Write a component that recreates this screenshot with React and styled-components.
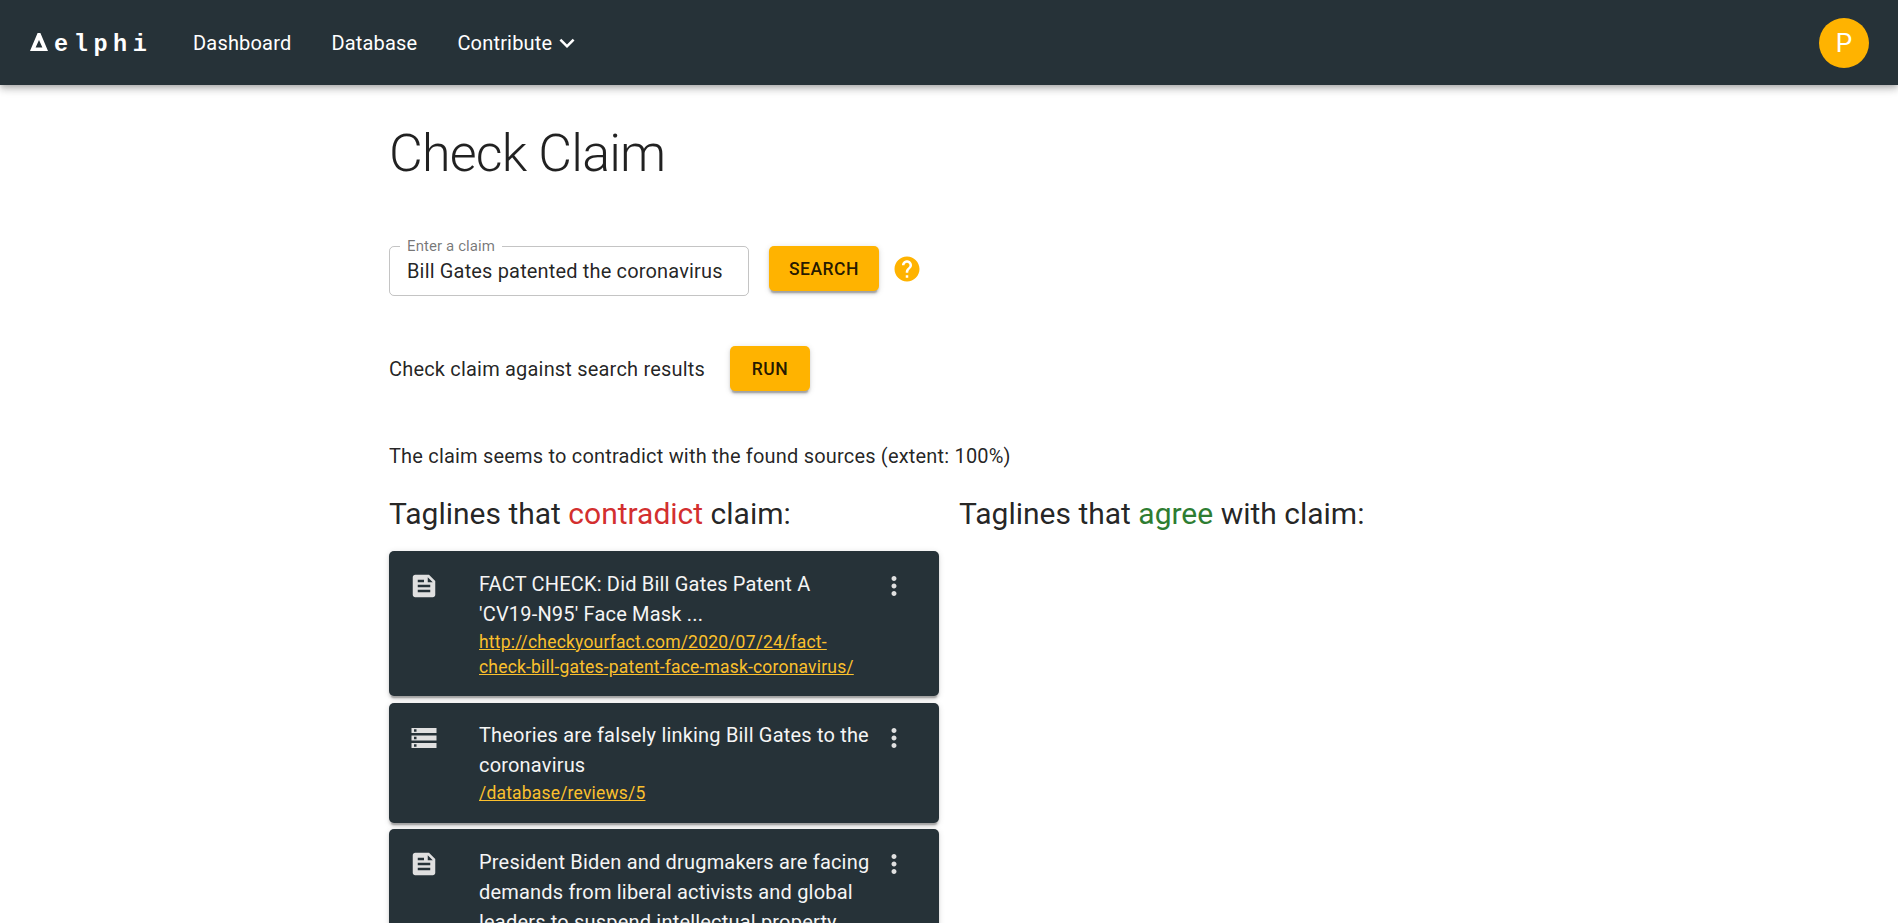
import React from "react";
import styled, { createGlobalStyle } from "styled-components";

const GlobalStyle = createGlobalStyle`
  * { box-sizing: border-box; }
  html, body { margin: 0; height: 100%; overflow: hidden; background: #fff; }
  body {
    font-family: Roboto, "Liberation Sans", sans-serif;
    font-size: 20px;
    line-height: 30px;
    letter-spacing: 0.00938em;
    color: rgba(0, 0, 0, 0.87);
  }
  h1, h2, p { margin: 0; font-weight: 400; }
`;

const Bar = styled.header`
  display: flex;
  align-items: center;
  height: 85px;
  padding: 0 29px 0 30px;
  background: #263238;
  color: #fff;
  box-shadow: 0 2.5px 5px -1.25px rgba(0, 0, 0, 0.2),
    0 5px 6.25px rgba(0, 0, 0, 0.14), 0 1.25px 12.5px rgba(0, 0, 0, 0.12);
`;

const Logo = styled.div`
  display: flex;
  align-items: baseline;
  width: 163px;
  padding-top: 4px;
  font-family: "Liberation Mono", monospace;
  font-weight: 700;
  font-size: 23.5px;
  letter-spacing: 5.6px;
`;

const LogoMark = styled.svg`
  width: 18px;
  height: 18px;
  margin-right: 6px;
`;

const Nav = styled.nav`
  display: flex;
  flex: 1;
  gap: 40px;
`;

const NavItem = styled.span`
  display: flex;
  align-items: center;
`;

const Chevron = styled.svg`
  width: 30px;
  height: 30px;
  fill: currentColor;
`;

const Avatar = styled.div`
  display: flex;
  align-items: center;
  justify-content: center;
  width: 50px;
  height: 50px;
  padding-top: 1px;
  border-radius: 50%;
  background: #ffb300;
  font-size: 26px;
  letter-spacing: 0;
`;

const Page = styled.main`
  width: 1120px;
  margin-left: 389px;
  padding-top: 38px;
`;

const Title = styled.h1`
  height: 62px;
  font-size: 52px;
  font-weight: 300;
  line-height: 62px;
  letter-spacing: -0.01562em;
`;

const Row = styled.div`
  display: flex;
  align-items: ${(p) => p.$align || "center"};
  margin-top: ${(p) => p.$top}px;
`;

const Field = styled.fieldset`
  width: 360px;
  height: 56px;
  margin: -6px 20px 0 0;
  padding: 3px 17px 0;
  border: 1px solid rgba(0, 0, 0, 0.23);
  border-radius: 5px;
`;

const FieldLabel = styled.legend`
  height: 13px;
  margin-left: -7px;
  padding: 0 7px;
  font-size: 15px;
  line-height: 13px;
  letter-spacing: 0.1px;
  color: rgba(0, 0, 0, 0.54);
`;

const FieldValue = styled.div`
  letter-spacing: 0.16px;
  white-space: nowrap;
`;

const Button = styled.button`
  width: ${(p) => p.$width}px;
  height: 45px;
  padding: 0;
  border: 0;
  border-radius: 5px;
  background: #ffb300;
  color: rgba(0, 0, 0, 0.87);
  font: 500 17.5px/30px Roboto, sans-serif;
  letter-spacing: 0.02857em;
  box-shadow: 0 3.75px 1.25px -2.5px rgba(0, 0, 0, 0.2),
    0 2.5px 2.5px rgba(0, 0, 0, 0.14), 0 1.25px 6.25px rgba(0, 0, 0, 0.12);
`;

const Icon = styled.svg`
  flex: none;
  width: 30px;
  height: 30px;
  fill: currentColor;
`;

const HelpIcon = styled(Icon)`
  margin: 8px 0 0 13px;
  color: #ffb300;
`;

const RunLabel = styled.p`
  width: 341px;
`;

const Verdict = styled.p`
  margin-top: 50px;
`;

const Columns = styled.div`
  display: grid;
  grid-template-columns: 550px 550px;
  column-gap: 20px;
  margin-top: 23px;
`;

const ColumnTitle = styled.h2`
  margin-bottom: 17px;
  font-size: 30px;
  line-height: 40px;
  letter-spacing: 0;
`;

const Tone = styled.span`
  color: ${(p) => p.$color};
`;

const CardList = styled.div`
  display: flex;
  flex-direction: column;
  gap: 6.5px;
`;

const Card = styled.article`
  display: flex;
  align-items: flex-start;
  padding: 17.5px 30px 16.5px 20px;
  border-radius: 5px;
  background: #263238;
  color: #fff;
  box-shadow: 0 3.75px 1.25px -2.5px rgba(0, 0, 0, 0.2),
    0 2.5px 2.5px rgba(0, 0, 0, 0.14), 0 1.25px 6.25px rgba(0, 0, 0, 0.12);
`;

const CardIcon = styled(Icon)`
  margin-top: 2.5px;
  color: #e0e0e0;
`;

const CardBody = styled.div`
  width: 395px;
  margin: 0 5px 0 40px;
  white-space: nowrap;
`;

const CardTitle = styled.p`
  color: #f5f5f5;
`;

const CardLink = styled.a`
  display: block;
  margin-top: 1px;
  font-size: 17.5px;
  line-height: 25px;
  letter-spacing: 0.01071em;
  color: #fbc02d;
  text-decoration: underline;
`;

const ICONS = {
  feed: "M16 3H5c-1.1 0-2 .9-2 2v14c0 1.1.9 2 2 2h14c1.1 0 2-.9 2-2V8l-5-5zM7 7h5v2H7V7zm10 10H7v-2h10v2zm0-4H7v-2h10v2zm-2-4V5l4 4h-4z",
  storage:
    "M2 20h20v-4H2v4zm2-3h2v2H4v-2zM2 4v4h20V4H2zm4 3H4V5h2v2zm-4 7h20v-4H2v4zm2-3h2v2H4v-2z",
  more: "M12 8c1.1 0 2-.9 2-2s-.9-2-2-2-2 .9-2 2 .9 2 2 2zm0 2c-1.1 0-2 .9-2 2s.9 2 2 2 2-.9 2-2-.9-2-2-2zm0 6c-1.1 0-2 .9-2 2s.9 2 2 2 2-.9 2-2-.9-2-2-2z",
  help: "M12 2C6.48 2 2 6.48 2 12s4.48 10 10 10 10-4.48 10-10S17.52 2 12 2zm1 17h-2v-2h2v2zm2.07-7.75l-.9.92C13.45 12.9 13 13.5 13 15h-2v-.5c0-1.1.45-2.1 1.17-2.83l1.24-1.26c.37-.36.59-.86.59-1.41 0-1.1-.9-2-2-2s-2 .9-2 2H8c0-2.21 1.79-4 4-4s4 1.79 4 4c0 .88-.36 1.68-.93 2.25z",
  expand: "M16.59 8.59L12 13.17 7.41 8.59 6 10l6 6 6-6z",
};

const sources = [
  {
    icon: "feed",
    title: ["FACT CHECK: Did Bill Gates Patent A", "'CV19-N95' Face Mask ..."],
    link: [
      "http://checkyourfact.com/2020/07/24/fact-",
      "check-bill-gates-patent-face-mask-coronavirus/",
    ],
  },
  {
    icon: "storage",
    title: ["Theories are falsely linking Bill Gates to the", "coronavirus"],
    link: ["/database/reviews/5"],
  },
  {
    icon: "feed",
    title: [
      "President Biden and drugmakers are facing",
      "demands from liberal activists and global",
      "leaders to suspend intellectual property",
    ],
    link: [],
  },
];

const lines = (parts) =>
  parts.map((part, i) => (
    <React.Fragment key={part}>
      {i > 0 && <br />}
      {part}
    </React.Fragment>
  ));

function SourceCard({ icon, title, link }) {
  return (
    <Card>
      <CardIcon viewBox="0 0 24 24">
        <path d={ICONS[icon]} />
      </CardIcon>
      <CardBody>
        <CardTitle>{lines(title)}</CardTitle>
        {link.length > 0 && <CardLink>{lines(link)}</CardLink>}
      </CardBody>
      <CardIcon viewBox="0 0 24 24">
        <path d={ICONS.more} />
      </CardIcon>
    </Card>
  );
}

export default function App() {
  return (
    <>
      <GlobalStyle />
      <Bar>
        <Logo>
          <LogoMark viewBox="0 0 18 18">
            <path
              fill="#fff"
              fillRule="evenodd"
              d="M7.6 0h2.8L18 18H0zM9 7L5.6 14.6h6.8z"
            />
          </LogoMark>
          elphi
        </Logo>
        <Nav>
          <NavItem>Dashboard</NavItem>
          <NavItem>Database</NavItem>
          <NavItem>
            Contribute
            <Chevron viewBox="0 0 24 24">
              <path d={ICONS.expand} />
            </Chevron>
          </NavItem>
        </Nav>
        <Avatar>P</Avatar>
      </Bar>
      <Page>
        <Title>Check Claim</Title>
        <Row $top={61} $align="flex-start">
          <Field>
            <FieldLabel>Enter a claim</FieldLabel>
            <FieldValue>Bill Gates patented the coronavirus</FieldValue>
          </Field>
          <Button $width={110}>SEARCH</Button>
          <HelpIcon viewBox="0 0 24 24">
            <path d={ICONS.help} />
          </HelpIcon>
        </Row>
        <Row $top={50}>
          <RunLabel>Check claim against search results</RunLabel>
          <Button $width={80}>RUN</Button>
        </Row>
        <Verdict>
          The claim seems to contradict with the found sources (extent: 100%)
        </Verdict>
        <Columns>
          <section>
            <ColumnTitle>
              Taglines that <Tone $color="#d32f2f">contradict</Tone> claim:
            </ColumnTitle>
            <CardList>
              {sources.map((s) => (
                <SourceCard key={s.title[0]} {...s} />
              ))}
            </CardList>
          </section>
          <section>
            <ColumnTitle>
              Taglines that <Tone $color="#2e7d32">agree</Tone> with claim:
            </ColumnTitle>
          </section>
        </Columns>
      </Page>
    </>
  );
}
